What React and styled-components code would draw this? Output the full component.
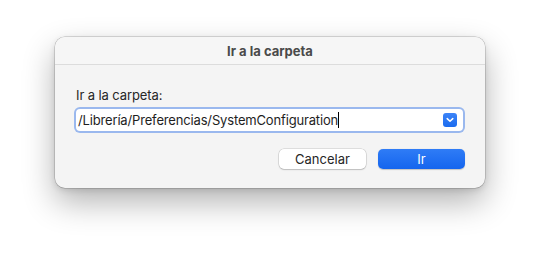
import React from "react";
import styled, { createGlobalStyle } from "styled-components";

const GlobalStyle = createGlobalStyle`
  html, body {
    margin: 0;
    padding: 0;
    background: #ffffff;
  }
  body {
    font-family: Inter, "Helvetica Neue", "Liberation Sans", Arial, sans-serif;
    -webkit-font-smoothing: antialiased;
  }
`;

const Page = styled.div`
  width: 541px;
  height: 263px;
  padding: 37px 0 0 55px;
  box-sizing: border-box;
  overflow: hidden;
`;

const Dialog = styled.div`
  width: 430px;
  height: 151px;
  box-sizing: border-box;
  background: #f4f4f4;
  border-radius: 10px;
  box-shadow: 0 0 0 0.5px rgba(0, 0, 0, 0.25), 0 14px 32px rgba(0, 0, 0, 0.3),
    0 2px 6px rgba(0, 0, 0, 0.12);
  display: flex;
  flex-direction: column;
  overflow: hidden;
`;

const TitleBar = styled.div`
  height: 27px;
  flex: none;
  display: flex;
  align-items: center;
  justify-content: center;
  border-bottom: 1px solid #dcdcdc;
  background: #f6f6f6;
  font-size: 13px;
  font-weight: 700;
  color: #4a4a4a;
`;

const Body = styled.div`
  padding: 22px 20px 0 21px;
  display: flex;
  flex-direction: column;
`;

const Label = styled.div`
  font-size: 13px;
  line-height: 16px;
  color: #262626;
  letter-spacing: -0.1px;
`;

const FieldRing = styled.div`
  margin-top: 4px;
  margin-left: -2px;
  padding: 2px;
  border-radius: 6px;
  background: #9ab8ee;
`;

const Field = styled.div`
  height: 22px;
  background: #ffffff;
  border-radius: 4px;
  display: flex;
  align-items: center;
  padding: 0 6px 0 2px;
  box-sizing: border-box;
`;

const Value = styled.span`
  font-size: 13px;
  color: #1e1e1e;
  white-space: nowrap;
  letter-spacing: -0.16px;
`;

const Caret = styled.span`
  display: inline-block;
  width: 1px;
  height: 16px;
  background: #000;
`;

const Spacer = styled.div`
  flex: 1;
`;

const ChevronButton = styled.div`
  width: 14px;
  height: 14px;
  border-radius: 3px;
  background: linear-gradient(#3d84f7, #1a6bef);
  display: flex;
  align-items: center;
  justify-content: center;
`;

const Buttons = styled.div`
  margin-top: 16px;
  display: flex;
  justify-content: flex-end;
  gap: 12px;
`;

const Button = styled.button`
  width: 87px;
  height: 20px;
  border-radius: 5px;
  font-family: inherit;
  font-size: 13px;
  padding: 0;
  border: none;
  cursor: default;
  color: ${(p) => (p.$primary ? "#ffffff" : "#262626")};
  background: ${(p) =>
    p.$primary ? "linear-gradient(#2f7cf6, #1565ee)" : "#ffffff"};
  box-shadow: ${(p) =>
    p.$primary
      ? "0 0.5px 1px rgba(0,0,0,0.2)"
      : "0 0 0 0.5px rgba(0,0,0,0.18), 0 1px 1.5px rgba(0,0,0,0.15)"};
`;

export default function App() {
  return (
    <>
      <GlobalStyle />
      <Page>
        <Dialog>
          <TitleBar>Ir a la carpeta</TitleBar>
          <Body>
            <Label>Ir a la carpeta:</Label>
            <FieldRing>
              <Field>
                <Value>/Librería/Preferencias/SystemConfiguration</Value>
                <Caret />
                <Spacer />
                <ChevronButton>
                  <svg width="8" height="6" viewBox="0 0 8 6">
                    <path
                      d="M1.2 1.6 L4 4.3 L6.8 1.6"
                      fill="none"
                      stroke="#fff"
                      strokeWidth="1.5"
                      strokeLinecap="round"
                      strokeLinejoin="round"
                    />
                  </svg>
                </ChevronButton>
              </Field>
            </FieldRing>
            <Buttons>
              <Button>Cancelar</Button>
              <Button $primary>Ir</Button>
            </Buttons>
          </Body>
        </Dialog>
      </Page>
    </>
  );
}
